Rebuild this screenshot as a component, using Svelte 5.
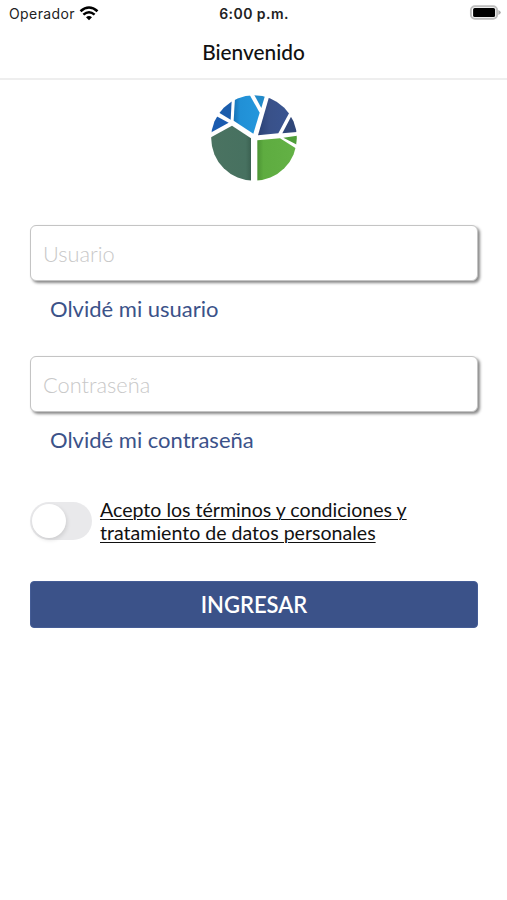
<script>
    let usuario = "";
    let contrasena = "";
    let acepta = false;

    function handleSubmit() {
        if (!acepta) return;
        console.log("Ingresando", usuario);
    }
</script>

<div class="status">
    <div class="carrier">
        <span>Operador</span>
        <svg width="20" height="15" viewBox="0 0 20 15">
            <path d="M1.5 5.2 Q10 -2.2 18.5 5.2" fill="none" stroke="#000" stroke-width="2.6" />
            <path d="M4.4 8.6 Q10 3.8 15.6 8.6" fill="none" stroke="#000" stroke-width="2.5" />
            <path d="M7 11.3 Q10 8.7 13 11.3 L10 14.3 Z" fill="#000" />
        </svg>
    </div>
    <span class="time">6:00 p.m.</span>
    <svg class="battery" width="32" height="16" viewBox="0 0 32 16">
        <rect x="1.9" y="1.2" width="26.2" height="12.6" rx="4" fill="#fff" stroke="#bdbdbd" stroke-width="1.9" />
        <rect x="4.1" y="3" width="22" height="9" rx="1.6" fill="#000" />
        <path d="M29.4 5 Q31.8 6.1 31.8 7.5 Q31.8 8.9 29.4 10 Z" fill="#aaa" />
    </svg>
</div>

<header>
    <h1>Bienvenido</h1>
</header>

<main>
    <svg class="logo" width="86" height="86" viewBox="21 21 258 258">
        <defs>
            <clipPath id="circle">
                <circle cx="150" cy="150" r="128.5" />
            </clipPath>
            <linearGradient id="navy" x1="0" x2="1">
                <stop offset="0" stop-color="#2b4275" />
                <stop offset="0.35" stop-color="#395189" />
                <stop offset="1" stop-color="#3a5592" />
            </linearGradient>
            <linearGradient id="sky" x1="0" x2="1">
                <stop offset="0" stop-color="#1872b5" />
                <stop offset="0.25" stop-color="#2190d6" />
                <stop offset="1" stop-color="#2497dc" />
            </linearGradient>
            <linearGradient id="forest" x1="0" x2="1">
                <stop offset="0" stop-color="#4b7361" />
                <stop offset="0.88" stop-color="#477160" />
                <stop offset="1" stop-color="#3b6151" />
            </linearGradient>
            <linearGradient id="leaf" x1="0" x2="1">
                <stop offset="0" stop-color="#4c9434" />
                <stop offset="0.14" stop-color="#5eac40" />
                <stop offset="1" stop-color="#64b246" />
            </linearGradient>
        </defs>
        <g clip-path="url(#circle)">
            <path d="M10 154 L84 113 L141 151 V290 H10 Z" fill="url(#forest)" />
            <path d="M160 157 L228 151 L290 190 V290 H160 Z" fill="url(#leaf)" />
            <path d="M238 149 L290 142 V176 Z" fill="#4f9e39" />
            <path d="M94 10 L89 98 L148 137 L167 74 L131 10 Z" fill="url(#sky)" />
            <path d="M145 10 L172 60 L187 10 Z" fill="#228ac9" />
            <path d="M200 10 L162 142 L223 136 L259 68 Z" fill="url(#navy)" />
            <path d="M267 75 L235 136 L290 131 Z" fill="#304779" />
            <path d="M84 20 L80 95 L43 73 Z" fill="#1b5dac" />
            <path d="M32 82 L74 104 L10 140 Z" fill="#1a5baf" />
        </g>
    </svg>

    <form on:submit|preventDefault={handleSubmit}>
        <input
            class="field"
            bind:value={usuario}
            type="text"
            name="usuario"
            placeholder="Usuario"
        />
        <a class="forgot" href="#usuario">Olvidé mi usuario</a>

        <input
            class="field"
            bind:value={contrasena}
            type="password"
            name="contrasena"
            placeholder="Contraseña"
        />
        <a class="forgot" href="#contrasena">Olvidé mi contraseña</a>

        <div class="terms">
            <label class="switch">
                <input bind:checked={acepta} type="checkbox" aria-label="Acepto" />
                <span class="knob"></span>
            </label>
            <a href="#terminos">
                Acepto los términos y condiciones y<br />tratamiento de datos personales
            </a>
        </div>

        <button type="submit">INGRESAR</button>
    </form>
</main>

<style>
    :global(body) {
        margin: 0;
        background: #fff;
        font-family: Lato, "Liberation Sans", sans-serif;
    }

    .status {
        display: grid;
        grid-template-columns: 1fr auto 1fr;
        align-items: center;
        height: 27px;
        padding: 0 6px 0 9px;
        font-family: Inter, "Liberation Sans", sans-serif;
        font-size: 14px;
        color: #222;
    }

    .carrier {
        display: flex;
        align-items: center;
        gap: 4px;
        letter-spacing: 0.4px;
    }

    .carrier svg {
        margin-top: -1px;
    }

    .time {
        font-weight: 600;
        font-size: 14px;
        letter-spacing: 0.45px;
        margin-left: -2px;
    }

    .battery {
        justify-self: end;
        margin-top: -1px;
    }

    header {
        height: 51px;
        border-bottom: 2px solid #eee;
    }

    h1 {
        margin: 0;
        font-size: 20.8px;
        font-weight: 500;
        line-height: 50px;
        text-align: center;
        color: #111;
    }

    main {
        padding: 15px 29px 0 30px;
    }

    .logo {
        display: block;
        margin: 0 auto;
    }

    form {
        display: flex;
        flex-direction: column;
        margin-top: 44px;
    }

    .field {
        box-sizing: border-box;
        width: 448px;
        height: 56px;
        padding: 0 12px;
        border: 1.5px solid #c4c4c4;
        border-radius: 6px;
        outline: none;
        background: #fff;
        box-shadow: 2px 2px 3px #888;
        font-family: inherit;
        font-size: 21.8px;
        font-weight: 300;
    }

    .field::placeholder {
        color: #c8c8c8;
        opacity: 1;
    }

    .forgot {
        margin: 13px 0 33px 20px;
        font-size: 22px;
        line-height: 29px;
        text-decoration: none;
        color: #3b5289;
    }

    .terms {
        display: flex;
        align-items: center;
        gap: 8px;
        margin-top: 11px;
    }

    .terms a {
        font-size: 19.57px;
        line-height: 23px;
        color: #111;
        text-underline-offset: 2px;
        text-decoration-thickness: 1.3px;
    }

    .switch {
        box-sizing: border-box;
        width: 62px;
        height: 38px;
        padding: 2px;
        border-radius: 19px;
        background: #e9e9eb;
    }

    .switch input {
        display: none;
    }

    .knob {
        display: block;
        width: 34px;
        height: 34px;
        border-radius: 50%;
        background: #fff;
        box-shadow: 1px 2px 4px rgba(0, 0, 0, 0.12);
        transition: transform 200ms;
    }

    .switch input:checked + .knob {
        transform: translateX(24px);
    }

    button {
        width: 448px;
        height: 47px;
        margin-top: 37px;
        padding: 0;
        border: 1px solid #455d96;
        border-radius: 4px;
        background: #3b5289;
        color: #fff;
        font-family: inherit;
        font-size: 22px;
        font-weight: 600;
    }
</style>
